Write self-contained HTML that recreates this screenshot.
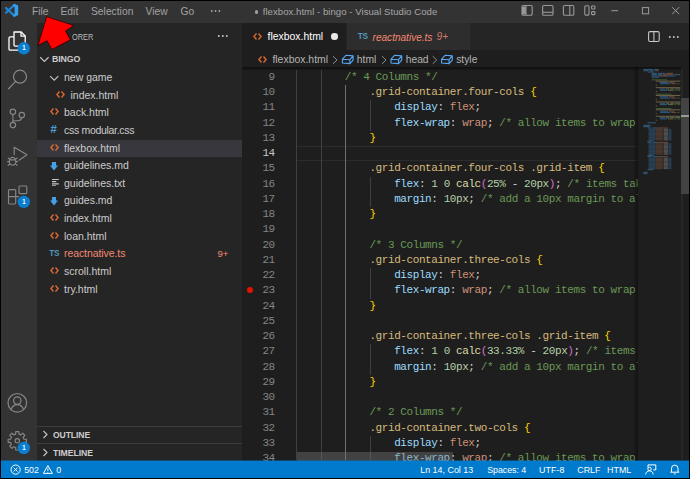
<!DOCTYPE html>
<html><head><meta charset="utf-8"><title>flexbox.html - bingo - Visual Studio Code</title>
<style>
*{box-sizing:border-box;margin:0;padding:0}
html,body{width:690px;height:479px;overflow:hidden;background:#000}
body{font-family:"Liberation Sans",sans-serif;position:relative;color:#ccc}
.abs{position:absolute}
#title{position:absolute;left:1px;top:1px;width:688px;height:22px;background:#333333}
#title .m{position:absolute;top:0;height:22px;line-height:21.800px;font-size:10.300px;color:#a2a2a2;white-space:nowrap}
#title .t{position:absolute;top:0;height:22px;line-height:21px;font-size:9.6px;color:#a6a6a6;white-space:nowrap}
#act{position:absolute;left:1px;top:23px;width:36px;height:438px;background:#333333}
#side{position:absolute;left:37px;top:23px;width:205px;height:438px;background:#252526;overflow:hidden}
#ed{position:absolute;left:242px;top:23px;width:447px;height:438px;background:#1e1e1e;overflow:hidden}
#status{position:absolute;left:1px;top:461px;width:688px;height:17px;background:#007acc;color:#fff;font-size:8.900px}
#status span{position:absolute;top:.5px;height:17px;line-height:17px;white-space:nowrap}
/* sidebar */
.row{position:absolute;left:37px;width:205px;height:17.6px}
.row.sel{background:#37373d}
.row .fn{position:absolute;top:0;line-height:17.6px;font-size:10.500px;color:#cccccc;white-space:nowrap}
.row.err .fn{color:#f48771}
.row .ic{position:absolute;top:0;height:17.6px;width:12px}
.row .chev{position:absolute;top:4.5px}
.fi{position:absolute;left:0}
.fi.html{color:#e37933;font-size:8px;font-weight:bold;letter-spacing:-.5px;line-height:17px;top:-0.5px}
.fi.css{color:#4d9fd6;font-size:11.500px;font-weight:bold;font-style:italic;line-height:17.6px;left:.3px;top:-.8px}
.fi.ts{color:#519aba;font-size:8.200px;font-weight:bold;line-height:17.6px;left:-.8px;letter-spacing:-.3px}
.fi.svg{top:4px}
.badge9{position:absolute;left:180.5px;top:0;line-height:17.6px;font-size:9.6px;color:#f48771}
.sh{position:absolute;font-size:9.4px;font-weight:bold;color:#cccccc;white-space:nowrap;letter-spacing:-.1px}
/* editor */
.ln{position:absolute;left:242px;width:32.800px;text-align:right;font-family:"Liberation Mono",monospace;font-size:11px;letter-spacing:-.42px;line-height:15.25px;height:15.25px;color:#858585}
.ln.act{color:#c6c6c6}
.cl{position:absolute;left:295.250px;font-family:"Liberation Mono",monospace;font-size:11px;letter-spacing:-.42px;line-height:15.25px;height:15.25px;color:#d4d4d4;white-space:pre}
.cm{color:#6a9955}.sel{color:#d7ba7d}.pr{color:#9cdcfe}.va{color:#ce9178}.nu{color:#b5cea8}.pu{color:#d4d4d4}.b1{color:#ffd700}.b2{color:#da70d6}.fn2{color:#dcdcaa}
#codeclip{position:absolute;left:0;top:0;width:638px;height:461px;overflow:hidden}
.bd{font-size:7.6px;font-weight:bold;color:#fff;line-height:8px;width:6px;text-align:center;transform:scaleX(.8)}
.bc{top:54.200px;font-size:10.300px;color:#b4b4b4;line-height:12px;white-space:nowrap}
.guide{position:absolute;width:1px;background:#404040}
</style></head><body>
<!-- title bar -->
<div id="title">
 <svg class="abs" style="left:3px;top:1px" width="18" height="18" viewBox="4 2 18 18"><path d="M6 7.900L14.300 15.700M6 12.700L14.300 5" stroke="#1f86d6" stroke-width="2.100" stroke-linecap="round" fill="none"/><path d="M14.200 3.800L18.200 5.600V15.100L14.200 17L12.600 15.400L14.600 13.600V7.200L12.600 5.300z" fill="#33a0ef"/></svg>
 <span class="m" style="left:31px">File</span>
 <span class="m" style="left:59.5px">Edit</span>
 <span class="m" style="left:90px">Selection</span>
 <span class="m" style="left:144.5px">View</span>
 <span class="m" style="left:179.5px">Go</span>
 <svg class="abs" style="left:209px;top:8.300px" width="12" height="4" viewBox="0 0 12 4"><circle cx="1.800" cy="2" r=".9" fill="#a9a9a9"/><circle cx="5.600" cy="2" r=".9" fill="#a9a9a9"/><circle cx="9.400" cy="2" r=".9" fill="#a9a9a9"/></svg>
 <div class="abs" style="left:253.700px;top:9px;width:3.600px;height:3.600px;border-radius:50%;background:#a0a0a0"></div><span class="t" style="left:261.700px;letter-spacing:.035px">flexbox.html - bingo - Visual Studio Code</span>
</div>
<div id="act"></div>
<div id="side"></div>
<div id="ed"></div>


<!-- activity bar icons -->
<svg class="abs" style="left:0;top:23px" width="40" height="438" viewBox="0 23 40 438" fill="none" stroke-linejoin="round" stroke-linecap="round">
 <!-- files (active) -->
 <g stroke="#ffffff" stroke-width="1.3">
  <path d="M13.5 36.8H10.2a1.2 1.2 0 0 0-1.2 1.2v11a1.2 1.2 0 0 0 1.2 1.2h7.6"/>
  <path d="M14 32h7.2l4 4v9a1.1 1.1 0 0 1-1.1 1.1H15.1A1.1 1.1 0 0 1 14 45V32.9A.9.9 0 0 1 14.9 32z"/>
  <path d="M21 32.3v3.9h4"/>
 </g>
 <!-- search -->
 <g stroke="#868686" stroke-width="1.25">
  <circle cx="20" cy="76.7" r="6.5"/>
  <path d="M15.6 81.4L8.6 88.8"/>
 </g>
 <!-- scm -->
 <g stroke="#868686" stroke-width="1.15">
  <circle cx="12.9" cy="111.8" r="2.7"/>
  <circle cx="21.8" cy="115.1" r="2.7"/>
  <circle cx="12.9" cy="125.1" r="2.7"/>
  <path d="M12.9 114.6v7.8M21.6 117.9c-.3 2-1.6 2.8-3.6 2.8h-4.6"/>
 </g>
 <!-- debug -->
 <g stroke="#868686" stroke-width="1.15">
  <path d="M14.2 154.5v-7.3l12.8 7.6-8 5.4"/>
  <ellipse cx="12.6" cy="161.3" rx="3.3" ry="3.9"/>
  <path d="M9.6 159.8h6M8.2 158l1.6 1.2M17 158l-1.6 1.2M7.6 161.6h1.7M17.6 161.6h-1.7M8.2 165.3l1.6-1.4M17 165.3l-1.6-1.4"/>
 </g>
 <!-- extensions -->
 <g stroke="#868686" stroke-width="1.15">
  <path d="M9.4 189.6h5.4a.9.9 0 0 1 .9.9v12.6a.9.9 0 0 1-.9.9H9.4a.9.9 0 0 1-.9-.9v-12.6a.9.9 0 0 1 .9-.9zM8.5 196.6h10"/>
  <rect x="19" y="186" width="7.8" height="7.6" rx="1"/>
 </g>
 <!-- account -->
 <g stroke="#868686" stroke-width="1.2">
  <circle cx="17.3" cy="402.8" r="9.3"/>
  <circle cx="17.3" cy="400.6" r="3.7"/>
  <path d="M11 409.6c1.2-3.3 3.6-5 6.3-5s5.100 1.700 6.300 5"/>
 </g>
 <!-- gear -->
 <g stroke="#868686" stroke-width="1.15">
  <circle cx="17.3" cy="440.8" r="2.2"/>
  <path d="M15.66 434.10 L15.73 431.63 L18.87 431.63 L18.94 434.10 L20.88 434.90 L22.67 433.21 L24.89 435.43 L23.20 437.22 L24.00 439.16 L26.47 439.23 L26.47 442.37 L24.00 442.44 L23.20 444.38 L24.89 446.17 L22.67 448.39 L20.88 446.70 L18.94 447.50 L18.87 449.97 L15.73 449.97 L15.66 447.50 L13.72 446.70 L11.93 448.39 L9.71 446.17 L11.40 444.38 L10.60 442.44 L8.13 442.37 L8.13 439.23 L10.60 439.16 L11.40 437.22 L9.71 435.43 L11.93 433.21 L13.72 434.90z"/>
 </g>
 <!-- badges -->
 <g stroke="none" fill="#0a7ed0">
  <circle cx="23.8" cy="48.300" r="6.200"/>
  <circle cx="23.8" cy="201.9" r="6.200"/>
  <circle cx="23.8" cy="448" r="6.200"/>
 </g>
</svg>
<span class="abs bd" style="left:20.8px;top:44.3px">1</span>
<span class="abs bd" style="left:20.8px;top:197.9px">1</span>
<span class="abs bd" style="left:20.8px;top:444px">1</span>

<!-- layout + window controls -->
<svg class="abs" style="left:515px;top:1px" width="174" height="22" viewBox="515 1 174 22" fill="none" stroke="#999999" stroke-width="1.1">
 <rect x="522" y="5.5" width="10.200" height="9.800" rx="1.300"/><path d="M522 6.500h3.800v7.800H522z" fill="#999999" stroke="none"/><path d="M526 5.500v9.800"/>
 <rect x="542.600" y="5.500" width="10.400" height="9.800" rx="1.300"/><path d="M542.600 12.300h10.400"/>
 <rect x="563.400" y="5.500" width="10.400" height="9.800" rx="1.300"/><path d="M569.800 5.500v9.800"/>
 <rect x="584.800" y="5.700" width="4.200" height="9.400" rx="1"/><rect x="591.600" y="6" width="3.300" height="3" rx=".6"/><rect x="591.600" y="11.600" width="3.300" height="3" rx=".6"/>
 <g stroke="#9c9c9c" stroke-width="1">
 <path d="M611.300 10.700h6.700"/>
 <rect x="642.400" y="7.600" width="6.200" height="6.200"/>
 <path d="M672.200 7.200l7 7M679.200 7.200l-7 7"/>
 </g>
</svg>

<!-- red arrow -->
<svg class="abs" style="left:30px;top:10px" width="60" height="45" viewBox="30 10 60 45"><path d="M46.700 16.600L73.900 25.600L65.500 30.900L70.400 39.800L51.900 49.500L47.100 40.700L37.900 45.500z" fill="#ff0000" stroke="#1a0000" stroke-width=".7" stroke-linejoin="miter"/></svg>

<!-- sidebar content -->
<span class="abs" style="left:71.500px;top:31.200px;font-size:9.400px;color:#bbbbbb;line-height:12px;transform:scaleX(.79);transform-origin:0 0">ORER</span>
<svg class="abs" style="left:217px;top:34px" width="12" height="4" viewBox="0 0 12 4"><circle cx="1.800" cy="2" r=".95" fill="#c8c8c8"/><circle cx="5.800" cy="2" r=".95" fill="#c8c8c8"/><circle cx="9.800" cy="2" r=".95" fill="#c8c8c8"/></svg>
<svg class="abs" style="left:39.200px;top:54.200px" width="10.800" height="10.800" viewBox="0 0 9 9"><path d="M1 2.700l3.500 3.500L8 2.700" fill="none" stroke="#c5c5c5" stroke-width=".95"/></svg>
<span class="sh" style="left:52.300px;top:53.400px;line-height:12px;transform:scaleX(.935);transform-origin:0 0">BINGO</span>
<div class="row" style="top:69.00px"><svg class="chev" style="left:12.200px;top:3.500px" width="10.500" height="10.500" viewBox="0 0 9 9"><path d="M1 2.700l3.500 3.500L8 2.700" fill="none" stroke="#c5c5c5" stroke-width=".95"/></svg><span class="fn" style="left:27px">new game</span></div>
<div class="row" style="top:86.64px"><span class="ic" style="left:19px"><svg class="fi svg" style="top:4.1px" width="9" height="7" viewBox="0 0 9 7"><path d="M3.5 .5L.9 3.5l2.6 3M5.5 .5l2.600 3-2.600 3" stroke="#dd6b33" stroke-width="1.35" fill="none"/></svg></span><span class="fn" style="left:33.5px">index.html</span></div>
<div class="row" style="top:104.28px"><span class="ic" style="left:13px"><svg class="fi svg" style="top:4.1px" width="9" height="7" viewBox="0 0 9 7"><path d="M3.5 .5L.9 3.5l2.6 3M5.5 .5l2.600 3-2.600 3" stroke="#dd6b33" stroke-width="1.35" fill="none"/></svg></span><span class="fn" style="left:27px">back.html</span></div>
<div class="row" style="top:121.92px"><span class="ic" style="left:13px"><span class="fi css">#</span></span><span class="fn" style="left:27px;letter-spacing:-.3px">css modular.css</span></div>
<div class="row sel" style="top:139.56px"><span class="ic" style="left:13px"><svg class="fi svg" style="top:4.1px" width="9" height="7" viewBox="0 0 9 7"><path d="M3.5 .5L.9 3.5l2.6 3M5.5 .5l2.600 3-2.600 3" stroke="#dd6b33" stroke-width="1.35" fill="none"/></svg></span><span class="fn" style="left:27px">flexbox.html</span></div>
<div class="row" style="top:157.20px"><span class="ic" style="left:13px"><svg class="fi svg" style="left:.2px;top:4.500px" width="8" height="9" viewBox="0 0 9 10"><path d="M2.2 0h4.6v4H9L4.5 9.5 0 4h2.2z" fill="#46a0e6"/></svg></span><span class="fn" style="left:27px">guidelines.md</span></div>
<div class="row" style="top:174.84px"><span class="ic" style="left:13px"><svg class="fi svg" style="left:1.800px;top:4.100px" width="6.800" height="7.500" viewBox="0 0 8 8" preserveAspectRatio="none"><path d="M0 .5h8M0 2.8h5M0 5.1h8M0 7.4h4.5" stroke="#c5c5c5" stroke-width="1.3"/></svg></span><span class="fn" style="left:27px">guidelines.txt</span></div>
<div class="row" style="top:192.48px"><span class="ic" style="left:13px"><svg class="fi svg" style="left:.2px;top:4.500px" width="8" height="9" viewBox="0 0 9 10"><path d="M2.2 0h4.6v4H9L4.5 9.5 0 4h2.2z" fill="#46a0e6"/></svg></span><span class="fn" style="left:27px">guides.md</span></div>
<div class="row" style="top:210.12px"><span class="ic" style="left:13px"><svg class="fi svg" style="top:4.1px" width="9" height="7" viewBox="0 0 9 7"><path d="M3.5 .5L.9 3.5l2.6 3M5.5 .5l2.600 3-2.600 3" stroke="#dd6b33" stroke-width="1.35" fill="none"/></svg></span><span class="fn" style="left:27px">index.html</span></div>
<div class="row" style="top:227.76px"><span class="ic" style="left:13px"><svg class="fi svg" style="top:4.1px" width="9" height="7" viewBox="0 0 9 7"><path d="M3.5 .5L.9 3.5l2.6 3M5.5 .5l2.600 3-2.600 3" stroke="#dd6b33" stroke-width="1.35" fill="none"/></svg></span><span class="fn" style="left:27px">loan.html</span></div>
<div class="row err" style="top:245.40px"><span class="ic" style="left:13px"><span class="fi ts">TS</span></span><span class="fn" style="left:27px;letter-spacing:-.08px">reactnative.ts</span><span class="badge9">9+</span></div>
<div class="row" style="top:263.04px"><span class="ic" style="left:13px"><svg class="fi svg" style="top:4.1px" width="9" height="7" viewBox="0 0 9 7"><path d="M3.5 .5L.9 3.5l2.6 3M5.5 .5l2.600 3-2.600 3" stroke="#dd6b33" stroke-width="1.35" fill="none"/></svg></span><span class="fn" style="left:27px">scroll.html</span></div>
<div class="row" style="top:280.68px"><span class="ic" style="left:13px"><svg class="fi svg" style="top:4.1px" width="9" height="7" viewBox="0 0 9 7"><path d="M3.5 .5L.9 3.5l2.6 3M5.5 .5l2.600 3-2.600 3" stroke="#dd6b33" stroke-width="1.35" fill="none"/></svg></span><span class="fn" style="left:27px">try.html</span></div>
<div class="abs" style="left:37px;top:425.5px;width:205px;height:1px;background:#3c3c3c"></div>
<div class="abs" style="left:37px;top:443px;width:205px;height:1px;background:#3c3c3c"></div>
<svg class="abs" style="left:40.5px;top:430px" width="9" height="9" viewBox="0 0 9 9"><path d="M2.5 1l3.5 3.5L2.5 8" fill="none" stroke="#c5c5c5" stroke-width="1.1"/></svg>
<span class="sh" style="left:52.800px;top:429px;line-height:12px;transform:scaleX(.915);transform-origin:0 0">OUTLINE</span>
<svg class="abs" style="left:40.5px;top:447.5px" width="9" height="9" viewBox="0 0 9 9"><path d="M2.5 1l3.5 3.5L2.5 8" fill="none" stroke="#c5c5c5" stroke-width="1.1"/></svg>
<span class="sh" style="left:52.800px;top:446.800px;line-height:12px;transform:scaleX(.93);transform-origin:0 0">TIMELINE</span>

<!-- tabs -->
<div class="abs" style="left:242px;top:23px;width:447px;height:27px;background:#252526"></div>
<div class="abs" style="left:242px;top:23px;width:104.300px;height:27px;background:#1e1e1e"></div>
<div class="abs" style="left:346.700px;top:23px;width:123.600px;height:27px;background:#2d2d2d"></div>
<svg class="abs" style="left:253px;top:33.3px" width="9" height="7" viewBox="0 0 9 7"><path d="M3.500 .5L.9 3.500l2.600 3M5.500 .5l2.600 3-2.600 3" stroke="#dd6b33" stroke-width="1.350" fill="none"/></svg>
<span class="abs" style="left:267.500px;top:31.400px;font-size:10.450px;color:#ffffff;line-height:12px">flexbox.html</span>
<div class="abs" style="left:331.200px;top:33px;width:6.600px;height:6.600px;border-radius:50%;background:#e8e8e8"></div>
<span class="abs" style="left:357.800px;top:30.800px;font-size:8.200px;font-weight:bold;color:#519aba;line-height:12px;letter-spacing:-.3px">TS</span>
<span class="abs" style="left:372.600px;top:31.500px;font-size:10.050px;color:#f48771;font-style:italic;line-height:12px">reactnative.ts</span>
<span class="abs" style="left:436.600px;top:31.300px;font-size:10.200px;color:#cf7a69;font-style:italic;line-height:12px">9+</span>
<!-- split icon & dots -->
<svg class="abs" style="left:647.500px;top:30.500px" width="12" height="11" viewBox="0 0 12 11"><rect x=".6" y=".6" width="10.600" height="9.800" rx="1.500" fill="none" stroke="#cccccc" stroke-width="1.050"/><path d="M5.900 .6v9.800" stroke="#cccccc" stroke-width="1.050"/></svg>
<svg class="abs" style="left:667.500px;top:34.500px" width="12" height="4" viewBox="0 0 12 4"><circle cx="1.800" cy="2" r=".95" fill="#c8c8c8"/><circle cx="5.800" cy="2" r=".95" fill="#c8c8c8"/><circle cx="9.800" cy="2" r=".95" fill="#c8c8c8"/></svg>

<!-- breadcrumb -->
<svg class="abs" style="left:258px;top:55.5px" width="9" height="7" viewBox="0 0 9 7"><path d="M3.500 .5L.9 3.500l2.600 3M5.500 .5l2.600 3-2.600 3" stroke="#dd6b33" stroke-width="1.350" fill="none"/></svg>
<span class="abs" style="left:272.400px;top:54.200px;font-size:10.450px;color:#b4b4b4;line-height:12px">flexbox.html</span>

<svg class="abs" style="left:325px;top:50px" width="160" height="18" viewBox="325 50 160 18" fill="none" stroke="#56a8f5" stroke-width="1.100" stroke-linejoin="round"><path d="M333.0 56.200l4 3.800-4 3.800" stroke="#8c8c8c" stroke-width="1"/><path d="M342.4 59.2L345.9 55.3L353.1 55.9L349.9 59.7z M342.4 59.2V63 L349.9 63.6V59.7 M349.9 63.6L353.1 60.1V55.9" /><path d="M382.0 56.200l4 3.800-4 3.800" stroke="#8c8c8c" stroke-width="1"/><path d="M391.0 59.2L394.5 55.3L401.7 55.9L398.5 59.7z M391.0 59.2V63 L398.5 63.6V59.7 M398.5 63.6L401.7 60.1V55.9" /><path d="M432.7 56.200l4 3.800-4 3.800" stroke="#8c8c8c" stroke-width="1"/><path d="M441.6 59.2L445.1 55.3L452.3 55.9L449.1 59.7z M441.6 59.2V63 L449.1 63.6V59.7 M449.1 63.6L452.3 60.1V55.9" /></svg>
<span class="abs bc" style="left:356.800px">html</span>
<span class="abs bc" style="left:405.700px">head</span>
<span class="abs bc" style="left:456.200px">style</span>
<div class="abs" style="left:242px;top:67px;width:438.500px;height:4px;background:linear-gradient(rgba(0,0,0,.55),rgba(0,0,0,0))"></div>
<!-- code -->
<div id="codeclip">
<div class="abs" style="left:296px;top:145.7px;width:342px;height:15.4px;border-top:1px solid #2c2c2c;border-bottom:1px solid #2c2c2c"></div>
<div class="guide" style="left:296.2px;top:69.80px;height:390.70px;background:#404040"></div>
<div class="guide" style="left:320.5px;top:69.80px;height:390.70px;background:#404040"></div>
<div class="guide" style="left:345.4px;top:85.05px;height:375.45px;background:#6e6e6e"></div>
<div class="guide" style="left:370.2px;top:100.30px;height:30.50px;background:#404040"></div>
<div class="guide" style="left:370.2px;top:176.55px;height:30.50px;background:#404040"></div>
<div class="guide" style="left:370.2px;top:268.05px;height:30.50px;background:#404040"></div>
<div class="guide" style="left:370.2px;top:344.30px;height:30.50px;background:#404040"></div>
<div class="guide" style="left:370.2px;top:435.80px;height:24.70px;background:#404040"></div>
<div class="ln" style="top:69.80px">9</div><pre class="cl" style="top:69.80px">        <span class="cm">/* 4 Columns */</span></pre>
<div class="ln" style="top:85.05px">10</div><pre class="cl" style="top:85.05px">            <span class="sel">.grid-container.four-cols</span> <span class="b1">{</span></pre>
<div class="ln" style="top:100.30px">11</div><pre class="cl" style="top:100.30px">                <span class="pr">display</span><span class="pu">:</span> <span class="va">flex</span><span class="pu">;</span></pre>
<div class="ln" style="top:115.55px">12</div><pre class="cl" style="top:115.55px">                <span class="pr">flex-wrap</span><span class="pu">:</span> <span class="va">wrap</span><span class="pu">;</span> <span class="cm">/* allow items to wrap to the next line */</span></pre>
<div class="ln" style="top:130.80px">13</div><pre class="cl" style="top:130.80px">            <span class="b1">}</span></pre>
<div class="ln act" style="top:146.05px">14</div><pre class="cl" style="top:146.05px"></pre>
<div class="ln" style="top:161.30px">15</div><pre class="cl" style="top:161.30px">            <span class="sel">.grid-container.four-cols .grid-item</span> <span class="b1">{</span></pre>
<div class="ln" style="top:176.55px">16</div><pre class="cl" style="top:176.55px">                <span class="pr">flex</span><span class="pu">:</span> <span class="nu">1</span> <span class="nu">0</span> <span class="fn2">calc</span><span class="b2">(</span><span class="nu">25%</span> <span class="pu">-</span> <span class="nu">20px</span><span class="b2">)</span><span class="pu">;</span> <span class="cm">/* items take up 25% of the width */</span></pre>
<div class="ln" style="top:191.80px">17</div><pre class="cl" style="top:191.80px">                <span class="pr">margin</span><span class="pu">:</span> <span class="nu">10px</span><span class="pu">;</span> <span class="cm">/* add a 10px margin to all sides */</span></pre>
<div class="ln" style="top:207.05px">18</div><pre class="cl" style="top:207.05px">            <span class="b1">}</span></pre>
<div class="ln" style="top:222.30px">19</div><pre class="cl" style="top:222.30px"></pre>
<div class="ln" style="top:237.55px">20</div><pre class="cl" style="top:237.55px">            <span class="cm">/* 3 Columns */</span></pre>
<div class="ln" style="top:252.80px">21</div><pre class="cl" style="top:252.80px">            <span class="sel">.grid-container.three-cols</span> <span class="b1">{</span></pre>
<div class="ln" style="top:268.05px">22</div><pre class="cl" style="top:268.05px">                <span class="pr">display</span><span class="pu">:</span> <span class="va">flex</span><span class="pu">;</span></pre>
<div class="ln" style="top:283.30px">23</div><pre class="cl" style="top:283.30px">                <span class="pr">flex-wrap</span><span class="pu">:</span> <span class="va">wrap</span><span class="pu">;</span> <span class="cm">/* allow items to wrap to the next line */</span></pre>
<div class="ln" style="top:298.55px">24</div><pre class="cl" style="top:298.55px">            <span class="b1">}</span></pre>
<div class="ln" style="top:313.80px">25</div><pre class="cl" style="top:313.80px"></pre>
<div class="ln" style="top:329.05px">26</div><pre class="cl" style="top:329.05px">            <span class="sel">.grid-container.three-cols .grid-item</span> <span class="b1">{</span></pre>
<div class="ln" style="top:344.30px">27</div><pre class="cl" style="top:344.30px">                <span class="pr">flex</span><span class="pu">:</span> <span class="nu">1</span> <span class="nu">0</span> <span class="fn2">calc</span><span class="b2">(</span><span class="nu">33.33%</span> <span class="pu">-</span> <span class="nu">20px</span><span class="b2">)</span><span class="pu">;</span> <span class="cm">/* items take up 33.33% of the width */</span></pre>
<div class="ln" style="top:359.55px">28</div><pre class="cl" style="top:359.55px">                <span class="pr">margin</span><span class="pu">:</span> <span class="nu">10px</span><span class="pu">;</span> <span class="cm">/* add a 10px margin to all sides */</span></pre>
<div class="ln" style="top:374.80px">29</div><pre class="cl" style="top:374.80px">            <span class="b1">}</span></pre>
<div class="ln" style="top:390.05px">30</div><pre class="cl" style="top:390.05px"></pre>
<div class="ln" style="top:405.30px">31</div><pre class="cl" style="top:405.30px">            <span class="cm">/* 2 Columns */</span></pre>
<div class="ln" style="top:420.55px">32</div><pre class="cl" style="top:420.55px">            <span class="sel">.grid-container.two-cols</span> <span class="b1">{</span></pre>
<div class="ln" style="top:435.80px">33</div><pre class="cl" style="top:435.80px">                <span class="pr">display</span><span class="pu">:</span> <span class="va">flex</span><span class="pu">;</span></pre>
<div class="ln" style="top:451.05px">34</div><pre class="cl" style="top:451.05px">                <span class="pr">flex-wrap</span><span class="pu">:</span> <span class="va">wrap</span><span class="pu">;</span> <span class="cm">/* allow items to wrap to the next line */</span></pre>
</div>

<div class="abs" style="left:633px;top:67px;width:5px;height:393.500px;background:linear-gradient(90deg,rgba(0,0,0,0),rgba(0,0,0,.4))"></div>
<!-- breakpoint -->
<div class="abs" style="left:246.5px;top:286.9px;width:6.3px;height:6.3px;border-radius:50%;background:#e51400"></div>
<!-- h scrollbar -->
<div class="abs" style="left:296.5px;top:452px;width:156px;height:8.5px;background:rgba(121,121,121,.4)"></div>
<!-- v scrollbar -->
<div class="abs" style="left:680.5px;top:68px;width:2px;height:392.5px;background:#262626"></div>
<div class="abs" style="left:680.5px;top:98px;width:8.5px;height:95.7px;background:#434343"></div>
<div class="abs" style="left:680.5px;top:115.3px;width:8.5px;height:2px;background:#9a9a9a"></div>
<svg class="abs" style="left:638px;top:60px;opacity:.62" width="43" height="130" viewBox="638 60 43 130"><rect x="643.40" y="68.90" width="9.27" height="1.05" fill="#3f7fb5" opacity="1"/><rect x="653.70" y="68.90" width="5.15" height="1.05" fill="#3f7fb5" opacity="1"/><rect x="643.40" y="70.20" width="5.15" height="1.05" fill="#3f7fb5" opacity="1"/><rect x="649.58" y="70.20" width="4.12" height="1.05" fill="#3f7fb5" opacity="1"/><rect x="654.73" y="70.20" width="4.12" height="1.05" fill="#9a6349" opacity="1"/><rect x="647.52" y="71.50" width="6.18" height="1.05" fill="#3f7fb5" opacity="1"/><rect x="651.64" y="72.81" width="5.15" height="1.05" fill="#3f7fb5" opacity="1"/><rect x="657.82" y="72.81" width="7.21" height="1.05" fill="#3f7fb5" opacity="1"/><rect x="666.06" y="72.81" width="7.21" height="1.05" fill="#9a6349" opacity="1"/><rect x="651.64" y="74.11" width="5.15" height="1.05" fill="#3f7fb5" opacity="1"/><rect x="657.82" y="74.11" width="4.12" height="1.05" fill="#3f7fb5" opacity="1"/><rect x="662.97" y="74.11" width="10.30" height="1.05" fill="#9a6349" opacity="1"/><rect x="674.30" y="74.11" width="6.00" height="1.05" fill="#3f7fb5" opacity="1"/><rect x="651.64" y="75.41" width="7.21" height="1.05" fill="#3f7fb5" opacity="1"/><rect x="658.85" y="75.41" width="8.24" height="1.05" fill="#8a8a8a" opacity="1"/><rect x="667.09" y="75.41" width="8.24" height="1.05" fill="#3f7fb5" opacity="1"/><rect x="651.64" y="76.71" width="7.21" height="1.05" fill="#3f7fb5" opacity="1"/><rect x="651.64" y="79.32" width="15.45" height="1.05" fill="#4f7f3a" opacity="1"/><rect x="655.76" y="80.62" width="24.54" height="1.05" fill="#9c8a5e" opacity="1"/><rect x="659.88" y="81.92" width="8.24" height="1.05" fill="#3f7fb5" opacity="1"/><rect x="669.15" y="81.92" width="5.15" height="1.05" fill="#9a6349" opacity="1"/><rect x="659.88" y="83.22" width="10.30" height="1.05" fill="#3f7fb5" opacity="1"/><rect x="671.21" y="83.22" width="5.15" height="1.05" fill="#9a6349" opacity="1"/><rect x="677.39" y="83.22" width="2.06" height="1.05" fill="#4f7f3a" opacity="1"/><rect x="655.76" y="84.52" width="1.03" height="1.05" fill="#b39a20" opacity="1"/><rect x="655.76" y="87.13" width="24.54" height="1.05" fill="#9c8a5e" opacity="1"/><rect x="659.88" y="88.43" width="5.15" height="1.05" fill="#3f7fb5" opacity="1"/><rect x="666.06" y="88.43" width="3.09" height="1.05" fill="#7f9470" opacity="1"/><rect x="670.18" y="88.43" width="4.12" height="1.05" fill="#9c8a5e" opacity="1"/><rect x="675.33" y="88.43" width="4.97" height="1.05" fill="#7f9470" opacity="1"/><rect x="659.88" y="89.73" width="7.21" height="1.05" fill="#3f7fb5" opacity="1"/><rect x="668.12" y="89.73" width="5.15" height="1.05" fill="#7f9470" opacity="1"/><rect x="674.30" y="89.73" width="2.06" height="1.05" fill="#4f7f3a" opacity="1"/><rect x="677.39" y="89.73" width="2.91" height="1.05" fill="#4f7f3a" opacity="1"/><rect x="655.76" y="91.03" width="1.03" height="1.05" fill="#b39a20" opacity="1"/><rect x="655.76" y="93.64" width="15.45" height="1.05" fill="#4f7f3a" opacity="1"/><rect x="655.76" y="94.94" width="24.54" height="1.05" fill="#9c8a5e" opacity="1"/><rect x="659.88" y="96.24" width="8.24" height="1.05" fill="#3f7fb5" opacity="1"/><rect x="669.15" y="96.24" width="5.15" height="1.05" fill="#9a6349" opacity="1"/><rect x="659.88" y="97.54" width="10.30" height="1.05" fill="#3f7fb5" opacity="1"/><rect x="671.21" y="97.54" width="5.15" height="1.05" fill="#9a6349" opacity="1"/><rect x="677.39" y="97.54" width="2.06" height="1.05" fill="#4f7f3a" opacity="1"/><rect x="655.76" y="98.85" width="1.03" height="1.05" fill="#b39a20" opacity="1"/><rect x="655.76" y="101.45" width="24.54" height="1.05" fill="#9c8a5e" opacity="1"/><rect x="659.88" y="102.75" width="5.15" height="1.05" fill="#3f7fb5" opacity="1"/><rect x="666.06" y="102.75" width="3.09" height="1.05" fill="#7f9470" opacity="1"/><rect x="670.18" y="102.75" width="4.12" height="1.05" fill="#9c8a5e" opacity="1"/><rect x="675.33" y="102.75" width="4.97" height="1.05" fill="#7f9470" opacity="1"/><rect x="659.88" y="104.05" width="7.21" height="1.05" fill="#3f7fb5" opacity="1"/><rect x="668.12" y="104.05" width="5.15" height="1.05" fill="#7f9470" opacity="1"/><rect x="674.30" y="104.05" width="2.06" height="1.05" fill="#4f7f3a" opacity="1"/><rect x="677.39" y="104.05" width="2.91" height="1.05" fill="#4f7f3a" opacity="1"/><rect x="655.76" y="105.36" width="1.03" height="1.05" fill="#b39a20" opacity="1"/><rect x="655.76" y="107.96" width="15.45" height="1.05" fill="#4f7f3a" opacity="1"/><rect x="655.76" y="109.26" width="24.54" height="1.05" fill="#9c8a5e" opacity="1"/><rect x="659.88" y="110.56" width="8.24" height="1.05" fill="#3f7fb5" opacity="1"/><rect x="669.15" y="110.56" width="5.15" height="1.05" fill="#9a6349" opacity="1"/><rect x="659.88" y="111.87" width="10.30" height="1.05" fill="#3f7fb5" opacity="1"/><rect x="671.21" y="111.87" width="5.15" height="1.05" fill="#9a6349" opacity="1"/><rect x="677.39" y="111.87" width="2.06" height="1.05" fill="#4f7f3a" opacity="1"/><rect x="655.76" y="113.17" width="1.03" height="1.05" fill="#b39a20" opacity="1"/><rect x="655.76" y="115.77" width="24.54" height="1.05" fill="#9c8a5e" opacity="1"/><rect x="659.88" y="117.07" width="5.15" height="1.05" fill="#3f7fb5" opacity="1"/><rect x="666.06" y="117.07" width="3.09" height="1.05" fill="#7f9470" opacity="1"/><rect x="670.18" y="117.07" width="4.12" height="1.05" fill="#9c8a5e" opacity="1"/><rect x="675.33" y="117.07" width="4.97" height="1.05" fill="#7f9470" opacity="1"/><rect x="659.88" y="118.38" width="7.21" height="1.05" fill="#3f7fb5" opacity="1"/><rect x="668.12" y="118.38" width="5.15" height="1.05" fill="#7f9470" opacity="1"/><rect x="674.30" y="118.38" width="2.06" height="1.05" fill="#4f7f3a" opacity="1"/><rect x="677.39" y="118.38" width="2.91" height="1.05" fill="#4f7f3a" opacity="1"/><rect x="655.76" y="119.68" width="1.03" height="1.05" fill="#b39a20" opacity="1"/><rect x="647.52" y="122.28" width="8.24" height="1.05" fill="#3f7fb5" opacity="1"/><rect x="643.40" y="124.89" width="7.21" height="1.05" fill="#3f7fb5" opacity="1"/><rect x="643.40" y="126.19" width="6.18" height="1.05" fill="#3f7fb5" opacity="1"/><rect x="647.52" y="127.49" width="4.12" height="1.05" fill="#3f7fb5" opacity="1"/><rect x="652.67" y="127.49" width="5.15" height="1.05" fill="#3f7fb5" opacity="1"/><rect x="657.82" y="127.49" width="10.30" height="1.05" fill="#9a6349" opacity="1"/><rect x="648.55" y="128.79" width="7.21" height="1.302" fill="#3f7fb5" opacity="0.55"/><rect x="656.07" y="128.79" width="6.70" height="1.302" fill="#9a6349" opacity="0.6"/><rect x="663.59" y="128.79" width="4.33" height="1.302" fill="#8a8a8a" opacity="0.75"/><rect x="668.33" y="128.79" width="3.09" height="1.302" fill="#3f7fb5" opacity="0.55"/><rect x="648.55" y="130.09" width="7.21" height="1.302" fill="#3f7fb5" opacity="0.55"/><rect x="656.07" y="130.09" width="6.70" height="1.302" fill="#9a6349" opacity="0.6"/><rect x="663.59" y="130.09" width="4.33" height="1.302" fill="#8a8a8a" opacity="0.75"/><rect x="668.33" y="130.09" width="3.09" height="1.302" fill="#3f7fb5" opacity="0.55"/><rect x="648.55" y="131.40" width="7.21" height="1.302" fill="#3f7fb5" opacity="0.55"/><rect x="656.07" y="131.40" width="6.70" height="1.302" fill="#9a6349" opacity="0.6"/><rect x="663.59" y="131.40" width="4.33" height="1.302" fill="#8a8a8a" opacity="0.75"/><rect x="668.33" y="131.40" width="3.09" height="1.302" fill="#3f7fb5" opacity="0.55"/><rect x="648.55" y="132.70" width="7.21" height="1.302" fill="#3f7fb5" opacity="0.55"/><rect x="656.07" y="132.70" width="6.70" height="1.302" fill="#9a6349" opacity="0.6"/><rect x="663.59" y="132.70" width="4.33" height="1.302" fill="#8a8a8a" opacity="0.75"/><rect x="668.33" y="132.70" width="3.09" height="1.302" fill="#3f7fb5" opacity="0.55"/><rect x="648.55" y="134.00" width="7.21" height="1.302" fill="#3f7fb5" opacity="0.55"/><rect x="656.07" y="134.00" width="6.70" height="1.302" fill="#9a6349" opacity="0.6"/><rect x="663.59" y="134.00" width="4.33" height="1.302" fill="#8a8a8a" opacity="0.75"/><rect x="668.33" y="134.00" width="3.09" height="1.302" fill="#3f7fb5" opacity="0.55"/><rect x="648.55" y="135.30" width="7.21" height="1.302" fill="#3f7fb5" opacity="0.55"/><rect x="656.07" y="135.30" width="6.70" height="1.302" fill="#9a6349" opacity="0.6"/><rect x="663.59" y="135.30" width="4.33" height="1.302" fill="#8a8a8a" opacity="0.75"/><rect x="668.33" y="135.30" width="3.09" height="1.302" fill="#3f7fb5" opacity="0.55"/><rect x="648.55" y="136.60" width="7.21" height="1.302" fill="#3f7fb5" opacity="0.55"/><rect x="656.07" y="136.60" width="6.70" height="1.302" fill="#9a6349" opacity="0.6"/><rect x="663.59" y="136.60" width="4.33" height="1.302" fill="#8a8a8a" opacity="0.75"/><rect x="668.33" y="136.60" width="3.09" height="1.302" fill="#3f7fb5" opacity="0.55"/><rect x="648.55" y="137.91" width="7.21" height="1.302" fill="#3f7fb5" opacity="0.55"/><rect x="656.07" y="137.91" width="6.70" height="1.302" fill="#9a6349" opacity="0.6"/><rect x="663.59" y="137.91" width="4.33" height="1.302" fill="#8a8a8a" opacity="0.75"/><rect x="668.33" y="137.91" width="3.09" height="1.302" fill="#3f7fb5" opacity="0.55"/><rect x="648.55" y="139.21" width="7.21" height="1.302" fill="#3f7fb5" opacity="0.55"/><rect x="656.07" y="139.21" width="6.70" height="1.302" fill="#9a6349" opacity="0.6"/><rect x="663.59" y="139.21" width="4.33" height="1.302" fill="#8a8a8a" opacity="0.75"/><rect x="668.33" y="139.21" width="3.09" height="1.302" fill="#3f7fb5" opacity="0.55"/><rect x="647.52" y="140.51" width="6.18" height="1.05" fill="#3f7fb5" opacity="1"/><rect x="647.52" y="141.81" width="4.12" height="1.05" fill="#3f7fb5" opacity="1"/><rect x="652.67" y="141.81" width="5.15" height="1.05" fill="#3f7fb5" opacity="1"/><rect x="657.82" y="141.81" width="10.30" height="1.05" fill="#9a6349" opacity="1"/><rect x="648.55" y="143.11" width="7.21" height="1.302" fill="#3f7fb5" opacity="0.55"/><rect x="656.07" y="143.11" width="6.70" height="1.302" fill="#9a6349" opacity="0.6"/><rect x="663.59" y="143.11" width="4.33" height="1.302" fill="#8a8a8a" opacity="0.75"/><rect x="668.33" y="143.11" width="3.09" height="1.302" fill="#3f7fb5" opacity="0.55"/><rect x="648.55" y="144.42" width="7.21" height="1.302" fill="#3f7fb5" opacity="0.55"/><rect x="656.07" y="144.42" width="6.70" height="1.302" fill="#9a6349" opacity="0.6"/><rect x="663.59" y="144.42" width="4.33" height="1.302" fill="#8a8a8a" opacity="0.75"/><rect x="668.33" y="144.42" width="3.09" height="1.302" fill="#3f7fb5" opacity="0.55"/><rect x="648.55" y="145.72" width="7.21" height="1.302" fill="#3f7fb5" opacity="0.55"/><rect x="656.07" y="145.72" width="6.70" height="1.302" fill="#9a6349" opacity="0.6"/><rect x="663.59" y="145.72" width="4.33" height="1.302" fill="#8a8a8a" opacity="0.75"/><rect x="668.33" y="145.72" width="3.09" height="1.302" fill="#3f7fb5" opacity="0.55"/><rect x="648.55" y="147.02" width="7.21" height="1.302" fill="#3f7fb5" opacity="0.55"/><rect x="656.07" y="147.02" width="6.70" height="1.302" fill="#9a6349" opacity="0.6"/><rect x="663.59" y="147.02" width="4.33" height="1.302" fill="#8a8a8a" opacity="0.75"/><rect x="668.33" y="147.02" width="3.09" height="1.302" fill="#3f7fb5" opacity="0.55"/><rect x="648.55" y="148.32" width="7.21" height="1.302" fill="#3f7fb5" opacity="0.55"/><rect x="656.07" y="148.32" width="6.70" height="1.302" fill="#9a6349" opacity="0.6"/><rect x="663.59" y="148.32" width="4.33" height="1.302" fill="#8a8a8a" opacity="0.75"/><rect x="668.33" y="148.32" width="3.09" height="1.302" fill="#3f7fb5" opacity="0.55"/><rect x="648.55" y="149.62" width="7.21" height="1.302" fill="#3f7fb5" opacity="0.55"/><rect x="656.07" y="149.62" width="6.70" height="1.302" fill="#9a6349" opacity="0.6"/><rect x="663.59" y="149.62" width="4.33" height="1.302" fill="#8a8a8a" opacity="0.75"/><rect x="668.33" y="149.62" width="3.09" height="1.302" fill="#3f7fb5" opacity="0.55"/><rect x="648.55" y="150.93" width="7.21" height="1.302" fill="#3f7fb5" opacity="0.55"/><rect x="656.07" y="150.93" width="6.70" height="1.302" fill="#9a6349" opacity="0.6"/><rect x="663.59" y="150.93" width="4.33" height="1.302" fill="#8a8a8a" opacity="0.75"/><rect x="668.33" y="150.93" width="3.09" height="1.302" fill="#3f7fb5" opacity="0.55"/><rect x="648.55" y="152.23" width="7.21" height="1.302" fill="#3f7fb5" opacity="0.55"/><rect x="656.07" y="152.23" width="6.70" height="1.302" fill="#9a6349" opacity="0.6"/><rect x="663.59" y="152.23" width="4.33" height="1.302" fill="#8a8a8a" opacity="0.75"/><rect x="668.33" y="152.23" width="3.09" height="1.302" fill="#3f7fb5" opacity="0.55"/><rect x="648.55" y="153.53" width="7.21" height="1.302" fill="#3f7fb5" opacity="0.55"/><rect x="656.07" y="153.53" width="6.70" height="1.302" fill="#9a6349" opacity="0.6"/><rect x="663.59" y="153.53" width="4.33" height="1.302" fill="#8a8a8a" opacity="0.75"/><rect x="668.33" y="153.53" width="3.09" height="1.302" fill="#3f7fb5" opacity="0.55"/><rect x="647.52" y="154.83" width="6.18" height="1.05" fill="#3f7fb5" opacity="1"/><rect x="647.52" y="156.13" width="4.12" height="1.05" fill="#3f7fb5" opacity="1"/><rect x="652.67" y="156.13" width="5.15" height="1.05" fill="#3f7fb5" opacity="1"/><rect x="657.82" y="156.13" width="10.30" height="1.05" fill="#9a6349" opacity="1"/><rect x="648.55" y="157.44" width="7.21" height="1.302" fill="#3f7fb5" opacity="0.55"/><rect x="656.07" y="157.44" width="6.70" height="1.302" fill="#9a6349" opacity="0.6"/><rect x="663.59" y="157.44" width="4.33" height="1.302" fill="#8a8a8a" opacity="0.75"/><rect x="668.33" y="157.44" width="3.09" height="1.302" fill="#3f7fb5" opacity="0.55"/><rect x="648.55" y="158.74" width="7.21" height="1.302" fill="#3f7fb5" opacity="0.55"/><rect x="656.07" y="158.74" width="6.70" height="1.302" fill="#9a6349" opacity="0.6"/><rect x="663.59" y="158.74" width="4.33" height="1.302" fill="#8a8a8a" opacity="0.75"/><rect x="668.33" y="158.74" width="3.09" height="1.302" fill="#3f7fb5" opacity="0.55"/><rect x="648.55" y="160.04" width="7.21" height="1.302" fill="#3f7fb5" opacity="0.55"/><rect x="656.07" y="160.04" width="6.70" height="1.302" fill="#9a6349" opacity="0.6"/><rect x="663.59" y="160.04" width="4.33" height="1.302" fill="#8a8a8a" opacity="0.75"/><rect x="668.33" y="160.04" width="3.09" height="1.302" fill="#3f7fb5" opacity="0.55"/><rect x="648.55" y="161.34" width="7.21" height="1.302" fill="#3f7fb5" opacity="0.55"/><rect x="656.07" y="161.34" width="6.70" height="1.302" fill="#9a6349" opacity="0.6"/><rect x="663.59" y="161.34" width="4.33" height="1.302" fill="#8a8a8a" opacity="0.75"/><rect x="668.33" y="161.34" width="3.09" height="1.302" fill="#3f7fb5" opacity="0.55"/><rect x="648.55" y="162.64" width="7.21" height="1.302" fill="#3f7fb5" opacity="0.55"/><rect x="656.07" y="162.64" width="6.70" height="1.302" fill="#9a6349" opacity="0.6"/><rect x="663.59" y="162.64" width="4.33" height="1.302" fill="#8a8a8a" opacity="0.75"/><rect x="668.33" y="162.64" width="3.09" height="1.302" fill="#3f7fb5" opacity="0.55"/><rect x="648.55" y="163.95" width="7.21" height="1.302" fill="#3f7fb5" opacity="0.55"/><rect x="656.07" y="163.95" width="6.70" height="1.302" fill="#9a6349" opacity="0.6"/><rect x="663.59" y="163.95" width="4.33" height="1.302" fill="#8a8a8a" opacity="0.75"/><rect x="668.33" y="163.95" width="3.09" height="1.302" fill="#3f7fb5" opacity="0.55"/><rect x="648.55" y="165.25" width="7.21" height="1.302" fill="#3f7fb5" opacity="0.55"/><rect x="656.07" y="165.25" width="6.70" height="1.302" fill="#9a6349" opacity="0.6"/><rect x="663.59" y="165.25" width="4.33" height="1.302" fill="#8a8a8a" opacity="0.75"/><rect x="668.33" y="165.25" width="3.09" height="1.302" fill="#3f7fb5" opacity="0.55"/><rect x="648.55" y="166.55" width="7.21" height="1.302" fill="#3f7fb5" opacity="0.55"/><rect x="656.07" y="166.55" width="6.70" height="1.302" fill="#9a6349" opacity="0.6"/><rect x="663.59" y="166.55" width="4.33" height="1.302" fill="#8a8a8a" opacity="0.75"/><rect x="668.33" y="166.55" width="3.09" height="1.302" fill="#3f7fb5" opacity="0.55"/><rect x="648.55" y="167.85" width="7.21" height="1.302" fill="#3f7fb5" opacity="0.55"/><rect x="656.07" y="167.85" width="6.70" height="1.302" fill="#9a6349" opacity="0.6"/><rect x="663.59" y="167.85" width="4.33" height="1.302" fill="#8a8a8a" opacity="0.75"/><rect x="668.33" y="167.85" width="3.09" height="1.302" fill="#3f7fb5" opacity="0.55"/><rect x="647.52" y="169.15" width="6.18" height="1.05" fill="#3f7fb5" opacity="1"/><rect x="643.40" y="171.76" width="4.12" height="1.05" fill="#3f7fb5" opacity="1"/><rect x="643.40" y="173.06" width="4.12" height="1.05" fill="#3f7fb5" opacity="1"/></svg>
<div class="abs" style="left:1px;top:460px;width:688px;height:1px;background:rgba(0,122,204,.45)"></div>
<div id="status">
 <svg class="abs" style="left:0;top:0" width="688" height="17" viewBox="1 460.500 688 17" fill="none" stroke="#fff" stroke-width="1" stroke-linejoin="round">
  <circle cx="15.6" cy="469.1" r="4.600"/><path d="M13.700 467.200l3.800 3.800M17.500 467.200l-3.800 3.800"/>
  <path d="M47.900 465.100l4.500 7.800h-9z"/><path d="M47.900 467.700v2.800M47.900 471.300v.9" stroke-width=".9"/>
  <!-- feedback -->
  <path d="M648 467.200v-2.800h7.800v5h-2.600"/><circle cx="649.500" cy="468.400" r="1.700"/><path d="M645.700 473.900c.3-2.400 1.700-3.500 3.800-3.500s3.400 1.100 3.700 3.500"/>
  <!-- bell -->
  <path d="M670.300 471.700h8.900M671.500 471.500v-3.600a3.250 3.250 0 0 1 6.500 0v3.600M673.900 473.400h1.700"/>
 </svg>
 <span style="left:23.200px">502</span>
 <span style="left:55.300px">0</span>
 <span style="left:419.200px;letter-spacing:.02px">Ln 14, Col 13</span>
 <span style="left:486.200px;letter-spacing:-.05px">Spaces: 4</span>
 <span style="left:538.100px;letter-spacing:.05px">UTF-8</span>
 <span style="left:576.200px;letter-spacing:.05px">CRLF</span>
 <span style="left:606px;letter-spacing:.05px">HTML</span>
</div>
</body></html>
